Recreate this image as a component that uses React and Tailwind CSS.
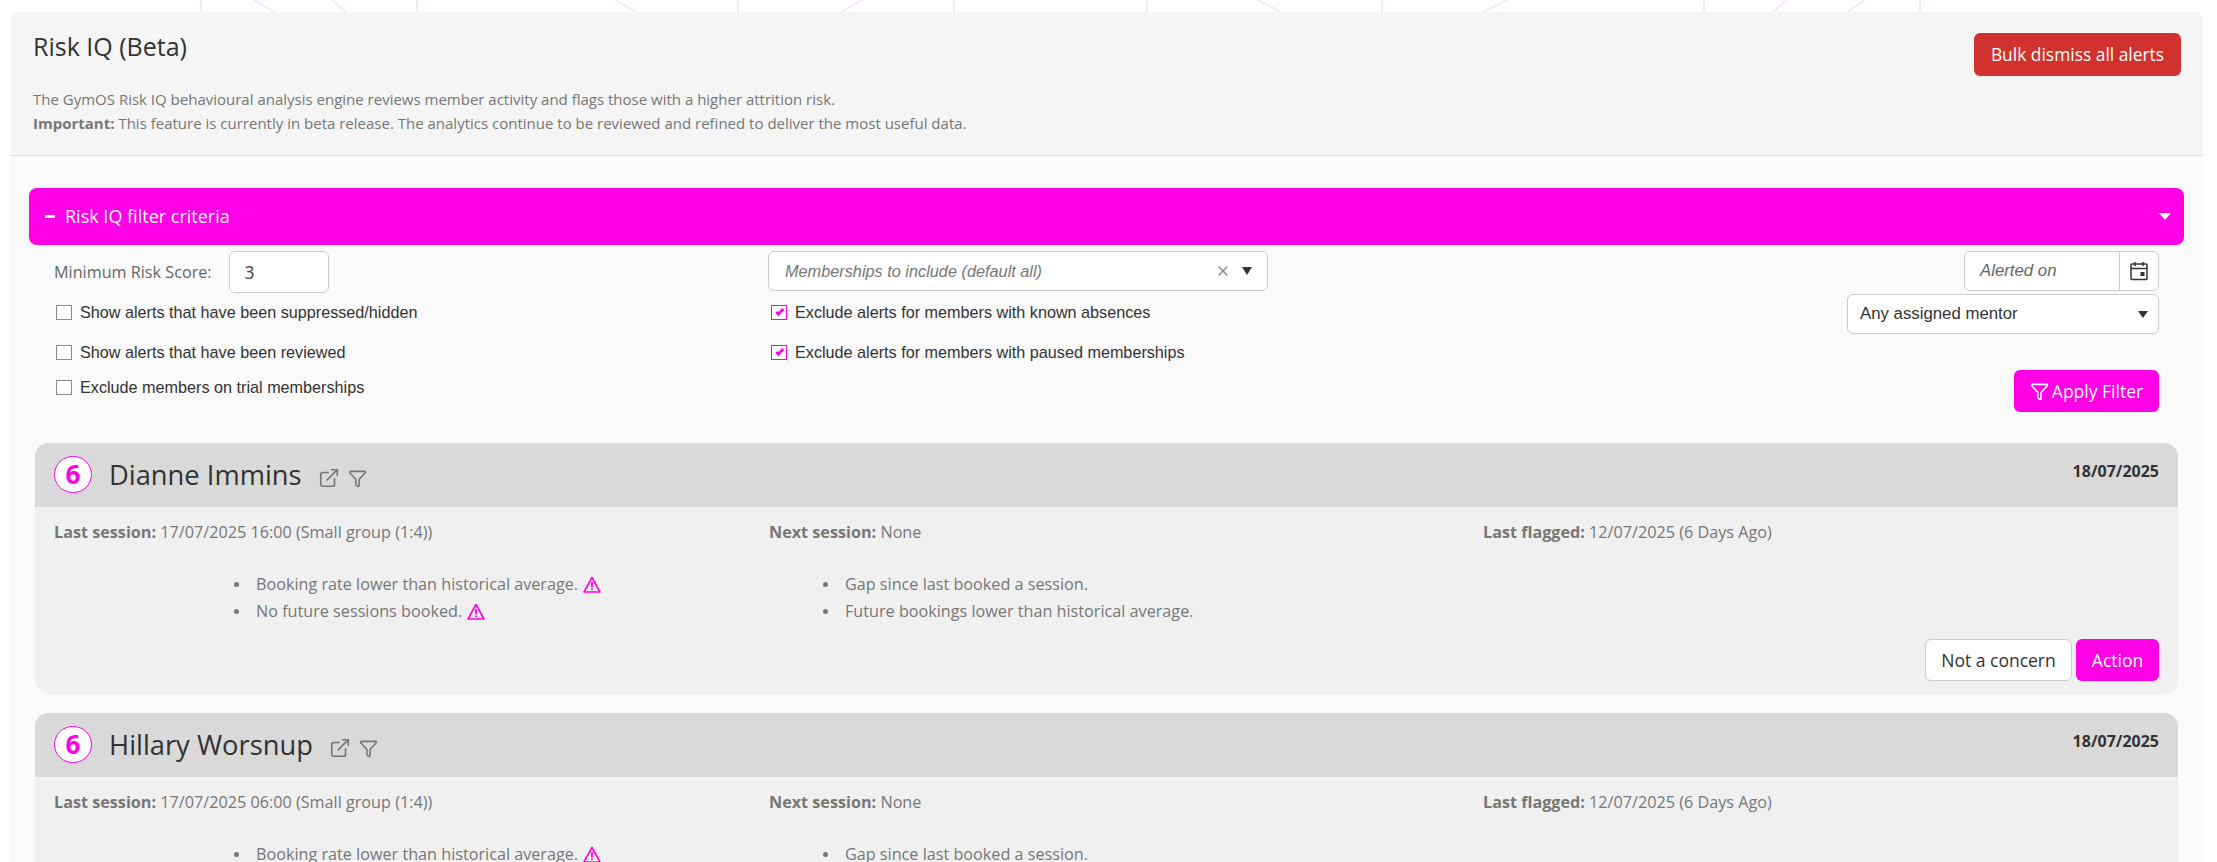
import { ExternalLink, Funnel, X } from 'lucide-react';

const openSans = "font-['Open_Sans',sans-serif]";
const arial = "font-['Liberation_Sans',Arial,sans-serif]";

const lines = [
  [201, 201], [254, 274], [332, 346], [417, 417], [615, 636], [738, 738], [862, 841], [954, 954],
  [1147, 1147], [1258, 1281], [1382, 1382], [1507, 1483], [1704, 1704], [1787, 1773], [1865, 1847], [1920, 1920],
];

const alerts = [
  {
    name: 'Dianne Immins',
    last: '17/07/2025 16:00 (Small group (1:4))',
  },
  {
    name: 'Hillary Worsnup',
    last: '17/07/2025 06:00 (Small group (1:4))',
  },
];

function Caret({ className }) {
  return (
    <svg viewBox="0 0 10 8" preserveAspectRatio="none" className={className}>
      <path d="M0 0h10L5 8z" fill="currentColor" />
    </svg>
  );
}

function WarnIcon() {
  return (
    <svg viewBox="0 0 18 17" className="ml-[5px] h-[17px] w-[18px] shrink-0 text-[#ff00e6]" fill="none" stroke="currentColor">
      <path d="M9 1.5L17 16H1z" strokeWidth="1.6" strokeLinejoin="round" />
      <path d="M9 6v5.5M9 12.5v1.6" strokeWidth="1.8" />
    </svg>
  );
}

function Check({ label, checked, className = '' }) {
  return (
    <label className={`flex h-5 items-center text-[16.2px] text-[#333] ${arial} ${className}`}>
      <span className={`mr-[8px] flex h-[15px] w-[16px] items-center justify-center border-[1.5px] bg-white ${checked ? 'border-[#ff00e6]' : 'border-[#8a8a8a]'}`}>
        {checked && (
          <svg viewBox="0 0 12 12" className="h-[11px] w-[11px]">
            <path d="M2.5 5.5l2.4 2.4L10 2" fill="none" stroke="#ff00e6" strokeWidth="3" />
          </svg>
        )}
      </span>
      {label}
    </label>
  );
}

function Reason({ text, warn }) {
  return (
    <li className="flex h-[27px] items-center">
      <span className="mr-[17px] h-[5px] w-[5px] rounded-full bg-[#777]" />
      {text}
      {warn && <WarnIcon />}
    </li>
  );
}

function AlertCard({ alert }) {
  return (
    <div className="mx-[25px] mb-[19px] overflow-hidden rounded-[14px] bg-[#f0f0f0]">
      <div className="flex h-[64px] items-start justify-between bg-[#d9d9d9] px-[19px]">
        <div className="flex items-center pt-[13px]">
          <span className="flex h-[37px] w-[38px] items-center justify-center rounded-full border border-[#ff00e6] bg-white text-[26px] font-bold text-[#ff00e6]">
            6
          </span>
          <span className="ml-[17px] text-[27.3px] leading-[37px] text-[#333]">{alert.name}</span>
          <ExternalLink size={22} strokeWidth={1.8} className="ml-[16px] mt-[7px] text-[#777]" />
          <Funnel size={19} strokeWidth={2} className="ml-[8px] mt-[7px] text-[#777]" />
        </div>
        <span className="pt-[18px] text-[16px] font-bold leading-[20px] text-[#333]">18/07/2025</span>
      </div>
      <div className="px-[19px] pb-[13px] pt-[15px] text-[16.2px] text-[#777]">
        <div className="grid grid-cols-[715px_714px_1fr] leading-[20px]">
          <div><b>Last session:</b> {alert.last}</div>
          <div><b>Next session:</b> None</div>
          <div><b>Last flagged:</b> 12/07/2025 (6 Days Ago)</div>
        </div>
        <div className="mt-[29px] grid grid-cols-[715px_714px_1fr]">
          <ul className="ml-[180px]">
            <Reason text="Booking rate lower than historical average." warn />
            <Reason text="No future sessions booked." warn />
          </ul>
          <ul className="ml-[54px]">
            <Reason text="Gap since last booked a session." />
            <Reason text="Future bookings lower than historical average." />
          </ul>
        </div>
        <div className="mt-[14px] flex justify-end gap-[4px]">
          <button className="h-[42px] w-[147px] rounded-[6px] border border-[#ccc] bg-white text-[17.5px] text-[#333]">Not a concern</button>
          <button className="h-[42px] w-[83px] rounded-[6px] bg-[#ff00e6] text-[17.5px] text-white">Action</button>
        </div>
      </div>
    </div>
  );
}

export default function App() {
  return (
    <div className={`relative h-[862px] overflow-hidden bg-white pl-[10px] pr-[14px] pt-[12px] ${openSans}`}>
      {/* background pattern peeking above the panel */}
      <svg className="absolute left-0 top-0 h-[12px] w-full" viewBox="0 0 2217 12" preserveAspectRatio="none">
        {lines.map(([a, b]) => (
          <line key={a} x1={a} y1="0" x2={b} y2="12" stroke="#f9e6fc" strokeWidth="2" />
        ))}
      </svg>

      <div className="relative h-[850px] overflow-hidden rounded-t-[8px] bg-[#fafafa]">
        {/* Header */}
        <div className="h-[144px] border-b border-[#ddd] bg-[#f5f5f5] px-[23px]">
          <div className="flex justify-between">
            <h1 className="pt-[18px] text-[25px] leading-[32px] text-[#333]">Risk IQ (Beta)</h1>
            <button className="mr-[-1px] mt-[21px] h-[43px] w-[207px] rounded-[6px] bg-[#d2322d] text-[17.4px] text-white">
              Bulk dismiss all alerts
            </button>
          </div>
          <p className="mt-[11px] text-[15px] leading-[24px] text-[#777]">
            The GymOS Risk IQ behavioural analysis engine reviews member activity and flags those with a higher attrition risk.
            <br />
            <b>Important:</b> This feature is currently in beta release. The analytics continue to be reviewed and refined to deliver the most useful data.
          </p>
        </div>

        {/* Filter bar */}
        <div className="ml-[19px] mr-[19px] mt-[32px] flex h-[57px] items-center justify-between rounded-[8px] bg-[#ff00e6] pl-[16px] pr-[13px] text-white">
          <div className="flex items-center text-[18px]">
            <span className="mr-[10px] h-[3px] w-[10px] bg-white" />
            Risk IQ filter criteria
          </div>
          <Caret className="h-[7px] w-[12px]" />
        </div>

        {/* Filter options */}
        <div className="mt-[6px] grid h-[192px] grid-cols-[714px_500px_1fr] pl-[44px] pr-[44px]">
          <div>
            <div className="flex h-[42px] items-center">
              <span className="text-[16.2px] text-[#666]">Minimum Risk Score:</span>
              <input
                defaultValue="3"
                className="ml-[17px] h-[42px] w-[100px] rounded-[6px] border border-[#ccc] bg-white px-[15px] text-[17.5px] text-[#444] outline-none"
              />
            </div>
            <Check label="Show alerts that have been suppressed/hidden" className="mt-[9px] pl-[2px]" />
            <Check label="Show alerts that have been reviewed" className="mt-[20px] pl-[2px]" />
            <Check label="Exclude members on trial memberships" className="mt-[15px] pl-[2px]" />
          </div>

          <div>
            <div className="flex h-[40px] items-center rounded-[6px] border border-[#ccc] bg-white pl-[16px] pr-[15px]">
              <span className={`flex-1 text-[16.3px] italic text-[#777] ${arial}`}>Memberships to include (default all)</span>
              <X size={16} strokeWidth={2} className="mr-[11px] text-[#888]" />
              <Caret className="h-[8px] w-[10px] text-[#333]" />
            </div>
            <Check checked label="Exclude alerts for members with known absences" className="mt-[11px] pl-[3px]" />
            <Check checked label="Exclude alerts for members with paused memberships" className="mt-[20px] pl-[3px]" />
          </div>

          <div className="flex flex-col items-end">
            <div className="flex h-[40px] w-[195px] rounded-[6px] border border-[#ccc] bg-white">
              <span className={`flex flex-1 items-center pl-[15px] text-[16.8px] italic text-[#666] ${arial}`}>Alerted on</span>
              <span className="flex w-[39px] items-center justify-center border-l border-[#ccc]">
                <svg viewBox="0 0 18 20" className="h-[20px] w-[18px]" fill="none" stroke="#333" strokeWidth="1.5">
                  <rect x="1" y="3" width="16" height="15.5" rx="1" />
                  <path d="M1 7.5h16M5 1v4M13 1v4" />
                  <rect x="10.5" y="11" width="4" height="4" fill="#333" stroke="none" />
                </svg>
              </span>
            </div>
            <div className={`mt-[3px] flex h-[40px] w-[312px] items-center justify-between rounded-[6px] border border-[#ccc] bg-white pl-[12px] pr-[10px] text-[16.8px] text-[#333] ${arial}`}>
              Any assigned mentor
              <Caret className="h-[7px] w-[10px]" />
            </div>
            <button className="mt-[36px] flex h-[42px] w-[145px] items-center justify-center rounded-[6px] bg-[#ff00e6] text-[17.5px] text-white">
              <Funnel size={19} strokeWidth={2} className="mr-[3px]" />
              Apply Filter
            </button>
          </div>
        </div>

        {/* Alerts */}
        {alerts.map((alert) => (
          <AlertCard key={alert.name} alert={alert} />
        ))}
      </div>
    </div>
  );
}
